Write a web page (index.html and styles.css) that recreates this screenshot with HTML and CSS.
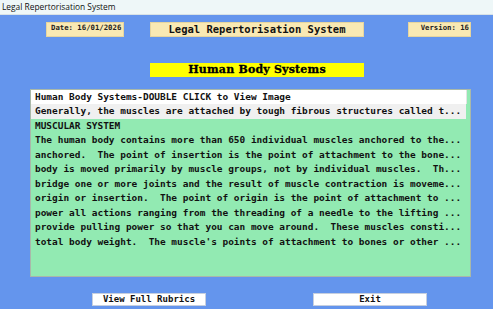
FILE: index.html
```html
<!DOCTYPE html>
<html>
<head>
<meta charset="utf-8">
<link rel="stylesheet" href="styles.css">
</head>
<body>
<div class="window">
  <div class="titlebar">Legal Repertorisation System</div>
  <div class="client">
    <div class="toprow">
      <div class="info date">Date: 16/01/2026</div>
      <div class="info title">Legal Repertorisation System</div>
      <div class="info version">Version: 16</div>
    </div>
    <div class="banner-row">
      <div class="banner">Human Body Systems</div>
    </div>
    <div class="list">
      <div class="row head">Human Body Systems-DOUBLE CLICK to View Image</div>
      <div class="row sel">Generally, the muscles are attached by tough fibrous structures called t...</div>
      <div class="row">MUSCULAR SYSTEM</div>
      <div class="row">The human body contains more than 650 individual muscles anchored to the...</div>
      <div class="row">anchored.  The point of insertion is the point of attachment to the bone...</div>
      <div class="row">body is moved primarily by muscle groups, not by individual muscles.  Th...</div>
      <div class="row">bridge one or more joints and the result of muscle contraction is moveme...</div>
      <div class="row">origin or insertion.  The point of origin is the point of attachment to ...</div>
      <div class="row">power all actions ranging from the threading of a needle to the lifting ...</div>
      <div class="row">provide pulling power so that you can move around.  These muscles consti...</div>
      <div class="row">total body weight.  The muscle's points of attachment to bones or other ...</div>
    </div>
    <div class="buttons">
      <div class="btn rubrics">View Full Rubrics</div>
      <div class="btn exit">Exit</div>
    </div>
  </div>
</div>
</body>
</html>
```
FILE: styles.css
```css
html, body {
  margin: 0;
  padding: 0;
  width: 493px;
  height: 309px;
  overflow: hidden;
}
.window {
  width: 493px;
  height: 309px;
  background: #6495ed;
  display: flex;
  flex-direction: column;
}
.titlebar {
  height: 15px;
  background: #eef7f8;
  border-bottom: 1px solid #d8e2e6;
  box-sizing: border-box;
  font-family: "Open Sans", "Liberation Sans", sans-serif;
  font-size: 8.4px;
  line-height: 14px;
  padding-left: 2px;
  color: #111;
}
.client {
  display: flex;
  flex-direction: column;
  padding-top: 7px;
}
.toprow {
  display: grid;
  grid-template-columns: 78px 26px 214px 44px 63px;
  padding-left: 46px;
  height: 14px;
}
.info {
  background: #f9e9b3;
  box-sizing: border-box;
  border: 1px solid #e6d59e;
  font-family: "DejaVu Sans Mono", monospace;
  font-weight: bold;
  color: #222;
  white-space: pre;
}
.date {
  grid-column: 1;
  font-size: 7.3px;
  line-height: 10px;
  padding-left: 4px;
}
.title {
  grid-column: 3;
  font-size: 10.5px;
  line-height: 13px;
  text-align: center;
  color: #111;
}
.version {
  grid-column: 5;
  font-size: 7.3px;
  line-height: 10px;
  text-align: right;
  padding-right: 1px;
}
.banner-row {
  padding-left: 150px;
  padding-top: 27px;
}
.banner {
  width: 214px;
  height: 14px;
  background: #ffff00;
  font-family: "DejaVu Serif", serif;
  font-weight: 900;
  font-size: 11px;
  line-height: 14px;
  text-align: center;
  color: #000;
  letter-spacing: 0.2px;
  -webkit-text-stroke: 0.3px #000;
}
.list {
  margin: 12px 0 0 30px;
  width: 441px;
  height: 188px;
  box-sizing: border-box;
  border: 1px solid #a9b8a9;
  background: #92eab2;
  font-family: "DejaVu Sans Mono", monospace;
  font-weight: bold;
  font-size: 9.45px;
  color: #111;
}
.row {
  height: 14.5px;
  line-height: 14.5px;
  padding-left: 4px;
  white-space: pre;
}
.row.head {
  background: #ffffff;
  height: 14px;
  line-height: 14px;
  border-right: 1px solid #e4e4e4;
  margin-right: 3px;
}
.row.sel {
  background: #f0f0f0;
  margin-right: 4px;
}
.buttons {
  display: grid;
  grid-template-columns: 114px 107px 114px;
  padding-left: 92px;
  padding-top: 16px;
}
.btn {
  height: 13px;
  box-sizing: border-box;
  background: #ffffff;
  border: 1px solid #c6cfdf;
  font-family: "DejaVu Sans Mono", monospace;
  font-weight: bold;
  font-size: 9px;
  line-height: 11px;
  text-align: center;
  color: #111;
}
.rubrics { grid-column: 1; }
.exit { grid-column: 3; }
```
